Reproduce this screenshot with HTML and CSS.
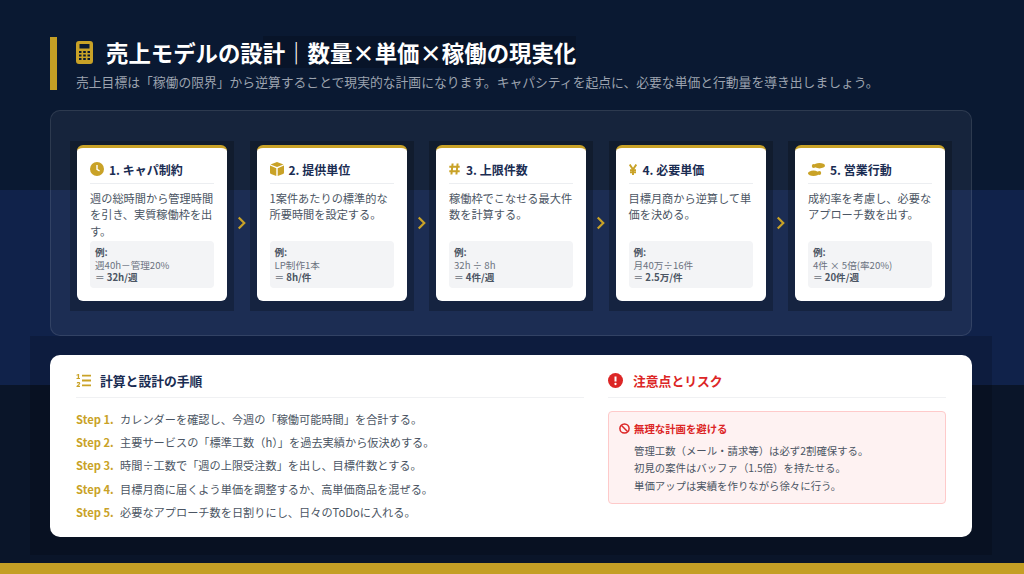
FILE: index.html
```html
<!DOCTYPE html>
<html lang="ja">
<head>
<meta charset="utf-8">
<title>売上モデルの設計</title>
<link rel="stylesheet" href="styles.css">
</head>
<body>
<div class="page">
  <main class="main">
    <header class="head">
      <div class="title-row">
        <svg class="calc" viewBox="0 0 17 23"><path fill-rule="evenodd" d="M3 0h11a3 3 0 0 1 3 3v17a3 3 0 0 1-3 3H3a3 3 0 0 1-3-3V3a3 3 0 0 1 3-3zM3.500 3v4.500h10V3zM3 10v2h2.500v-2zM7.200 10v2h2.600v-2zM11.500 10v2H14v-2zM3 13.500v2h2.500v-2zM7.200 13.500v2h2.600v-2zM11.500 13.500v2H14v-2zM3 17v2h2.500v-2zM7.200 17v2h2.600v-2zM11.500 17v2H14v-2z"/></svg>
        <h1 class="title">売上モデルの設<span class="title-dark">計｜数量×単価×稼働の現実化</span></h1>
      </div>
      <p class="sub">売上目標は「稼働の限界」から逆算することで現実的な計画になります。キャパシティを起点に、必要な単価と行動量を導き出しましょう。</p>
    </header>

    <section class="panel">
      <div class="shade">
        <article class="card">
          <h2 class="card-title"><svg class="ci" viewBox="0 0 14 14"><circle cx="7" cy="7" r="7"/><path d="M7 3v4.300l2.600 1.700" fill="none" stroke="#fff" stroke-width="1.400"/></svg>1. キャパ制約</h2>
          <p class="desc">週の総時間から管理時間を引き、実質稼働枠を出す。</p>
          <div class="ex"><b class="ex-l">例:</b><span>週40h－管理20%</span><span>＝ <b>32h/週</b></span></div>
        </article>
      </div>
      <svg class="arrow" viewBox="0 0 9 14"><path d="M1.500 1.500 7 7l-5.500 5.500" fill="none" stroke-width="2.200"/></svg>
      <div class="shade">
        <article class="card">
          <h2 class="card-title"><svg class="ci" viewBox="0 0 14 14"><path d="M7 0 13.500 2.400 7 5 .5 2.400z"/><path d="M0 3.600 6.300 6.200V14L1 12a1.500 1.500 0 0 1-1-1.400z"/><path d="M14 3.600 7.700 6.200V14l5.300-2a1.500 1.500 0 0 0 1-1.400z"/></svg>2. 提供単位</h2>
          <p class="desc">1案件あたりの標準的な所要時間を設定する。</p>
          <div class="ex"><b class="ex-l">例:</b><span>LP制作1本</span><span>＝ <b>8h/件</b></span></div>
        </article>
      </div>
      <svg class="arrow" viewBox="0 0 9 14"><path d="M1.500 1.500 7 7l-5.500 5.500" fill="none" stroke-width="2.200"/></svg>
      <div class="shade">
        <article class="card">
          <h2 class="card-title"><svg class="ci ci-n" viewBox="0 0 11 12"><path d="M3.600.5 2.400 11.500M8.600.5 7.400 11.500M.3 3.800h10.400M.3 8.200h10.400" fill="none" stroke-width="2"/></svg>3. 上限件数</h2>
          <p class="desc">稼働枠でこなせる最大件数を計算する。</p>
          <div class="ex"><b class="ex-l">例:</b><span>32h ÷ 8h</span><span>＝ <b>4件/週</b></span></div>
        </article>
      </div>
      <svg class="arrow" viewBox="0 0 9 14"><path d="M1.500 1.500 7 7l-5.500 5.500" fill="none" stroke-width="2.200"/></svg>
      <div class="shade">
        <article class="card">
          <h2 class="card-title"><svg class="ci ci-y" viewBox="0 0 8 11"><path d="M.7.500 4 5.500 7.300.5M4 5.500V11M1 6.200h6M1 8.400h6" fill="none" stroke-width="1.900"/></svg>4. 必要単価</h2>
          <p class="desc">目標月商から逆算して単価を決める。</p>
          <div class="ex"><b class="ex-l">例:</b><span>月40万÷16件</span><span>＝ <b>2.5万/件</b></span></div>
        </article>
      </div>
      <svg class="arrow" viewBox="0 0 9 14"><path d="M1.500 1.500 7 7l-5.500 5.500" fill="none" stroke-width="2.200"/></svg>
      <div class="shade">
        <article class="card">
          <h2 class="card-title"><svg class="ci ci-s" viewBox="0 0 17 13"><ellipse cx="11.500" cy="2.700" rx="5.500" ry="2.700"/><ellipse cx="5.700" cy="3" rx="1.900" ry="2"/><ellipse cx="5.500" cy="10.300" rx="5.500" ry="2.700"/><ellipse cx="11.300" cy="10" rx="1.900" ry="2"/></svg>5. 営業行動</h2>
          <p class="desc">成約率を考慮し、必要なアプローチ数を出す。</p>
          <div class="ex"><b class="ex-l">例:</b><span>4件 × 5倍(率20%)</span><span>＝ <b>20件/週</b></span></div>
        </article>
      </div>
    </section>

    <div class="lower-shade">
      <section class="lower">
        <div class="col-steps">
          <h2 class="sec-title navy"><svg class="si-list" viewBox="0 0 15 13"><path class="gold-f" d="M.5.700 2.300 0h.8v4H4v1H.5V4h1.300V1.300L.5 1.800zM.5 13v-1.100l2-1.600c.5-.4.600-.7.400-.9-.3-.3-1-.2-2 .3V8.300c1.400-.6 3.300-.6 3.400 1 0 .8-.5 1.300-2 2.500H4V13z" /><path d="M6 1.700h9M6 6.500h9M6 11.300h9" fill="none" stroke-width="1.800"/></svg>計算と設計の手順</h2>
          <ol class="steps">
            <li><b>Step 1.</b><span>カレンダーを確認し、今週の「稼働可能時間」を合計する。</span></li>
            <li><b>Step 2.</b><span>主要サービスの「標準工数（h）」を過去実績から仮決めする。</span></li>
            <li><b>Step 3.</b><span>時間÷工数で「週の上限受注数」を出し、目標件数とする。</span></li>
            <li><b>Step 4.</b><span>目標月商に届くよう単価を調整するか、高単価商品を混ぜる。</span></li>
            <li><b>Step 5.</b><span>必要なアプローチ数を日割りにし、日々のToDoに入れる。</span></li>
          </ol>
        </div>
        <div class="col-risk">
          <h2 class="sec-title red"><svg class="si-alert" viewBox="0 0 15 15"><circle cx="7.500" cy="7.500" r="7.500" fill="#dc2626"/><path d="M7.500 3.500v5" stroke="#fff" stroke-width="2" fill="none"/><circle cx="7.500" cy="11" r="1.150" fill="#fff"/></svg>注意点とリスク</h2>
          <div class="alert">
            <h3 class="alert-title"><svg class="si-ban" viewBox="0 0 11 11"><circle cx="5.500" cy="5.500" r="4.600" fill="none" stroke="#dc2626" stroke-width="1.500"/><path d="M2.300 2.300l6.400 6.400" stroke="#dc2626" stroke-width="1.500"/></svg>無理な計画を避ける</h3>
            <ul class="alert-list">
              <li>管理工数（メール・請求等）は必ず2割確保する。</li>
              <li>初見の案件はバッファ（1.5倍）を持たせる。</li>
              <li>単価アップは実績を作りながら徐々に行う。</li>
            </ul>
          </div>
        </div>
      </section>
    </div>
  </main>
  <div class="foot"></div>
</div>
</body>
</html>
```

FILE: styles.css
```css
* { box-sizing: border-box; margin: 0; padding: 0; }
html, body { width: 1024px; height: 574px; overflow: hidden; }
body { font-family: "Noto Sans CJK JP", "Noto Sans", sans-serif; }

.page {
  width: 1024px;
  height: 574px;
  display: flex;
  flex-direction: column;
  background: linear-gradient(#0a1932 0 190px, #10224a 190px 385px, #0a1529 385px);
}
.main { flex: 1; padding: 37px 52px 0 50px; }
.foot { height: 11px; background: #c49f25; }

.head {
  height: 53px;
  border-left: 7px solid #c49f25;
  padding-left: 19px;
}
.title-row { display: flex; align-items: center; height: 31px; }
.calc { width: 17px; height: 23px; fill: #c9a227; margin-right: 13px; flex: none; }
.title { font-size: 22.4px; font-weight: 700; color: #fff; line-height: 31px; white-space: nowrap; }
.title-dark { background: #081429; }
.sub { font-size: 12.8px; line-height: 18px; margin-top: 5px; color: #9ca3af; white-space: nowrap; }

.panel {
  margin-top: 20px;
  height: 226px;
  display: flex;
  align-items: flex-start;
  padding: 30px 19px 0;
  background: rgba(255, 255, 255, .05);
  border: 1px solid rgba(255, 255, 255, .1);
  border-radius: 10px;
}
.shade {
  flex: none;
  width: 164px;
  padding: 4px 7px 10px;
  background: rgba(0, 0, 0, .22);
}
.arrow {
  flex: 1;
  height: 14px;
  margin-top: 75px;
  stroke: #c9a227;
}
.card {
  height: 156px;
  background: #fff;
  border-top: 3px solid #c9a227;
  border-radius: 6px;
  padding: 10px 13px 0;
  display: flex;
  flex-direction: column;
}
.card-title {
  display: flex;
  align-items: center;
  gap: 5px;
  height: 26px;
  padding-bottom: 3px;
  font-size: 12px;
  font-weight: 700;
  color: #1a2c52;
  border-bottom: 1px solid #eceef1;
  white-space: nowrap;
}
.ci { width: 14px; height: 14px; flex: none; fill: #c9a227; stroke: #c9a227; stroke-width: 0; }
.ci-n { width: 11px; height: 12px; margin-right: 1px; }
.ci-y { width: 8px; height: 11px; margin-right: 1px; }
.ci-s { width: 17px; height: 13px; }
.desc {
  height: 51px;
  margin-top: 6px;
  font-size: 11.2px;
  line-height: 16.3px;
  color: #4b5563;
}
.ex {
  display: flex;
  flex-direction: column;
  height: 47px;
  padding: 5px 5px 0;
  background: #f3f4f6;
  border-radius: 4px;
  font-size: 9.6px;
  line-height: 12.5px;
  color: #6b7280;
}
.ex b { color: #4b5563; font-weight: 700; }

.lower-shade {
  margin: 0 -20px;
  padding: 19px 20px 18px;
  background: rgba(0, 0, 0, .16);
}
.lower {
  display: flex;
  gap: 24px;
  height: 182px;
  padding: 13px 26px 0;
  background: #fff;
  border-radius: 10px;
}
.col-steps { flex: none; width: 508px; }
.col-risk { flex: 1; }
.sec-title {
  display: flex;
  align-items: center;
  height: 30px;
  padding-bottom: 4px;
  font-size: 12.8px;
  font-weight: 700;
  border-bottom: 1px solid #f0f1f3;
}
.navy { color: #1a2c52; }
.red { color: #dc2626; }
.si-list { width: 15px; height: 13px; margin-right: 9px; stroke: #c9a227; }
.gold-f { fill: #c9a227; stroke: none; }
.si-alert { width: 15px; height: 15px; margin-right: 10px; }

.steps { list-style: none; margin-top: 9.5px; }
.steps li { display: flex; height: 23.2px; align-items: center; font-size: 11.2px; color: #4b5563; white-space: nowrap; }
.steps b { width: 44px; flex: none; color: #c9a227; font-weight: 700; }

.alert {
  margin-top: 13px;
  height: 93px;
  padding: 8px 10px 0;
  background: #fef2f2;
  border: 1px solid #fecaca;
  border-radius: 4px;
}
.alert-title {
  display: flex;
  align-items: center;
  gap: 4px;
  font-size: 10.4px;
  line-height: 17px;
  font-weight: 700;
  color: #dc2626;
}
.si-ban { width: 11px; height: 11px; }
.alert-list { list-style: none; margin-top: 5px; padding-left: 15px; }
.alert-list li { font-size: 10.4px; line-height: 17.4px; color: #4b5563; white-space: nowrap; }
```
